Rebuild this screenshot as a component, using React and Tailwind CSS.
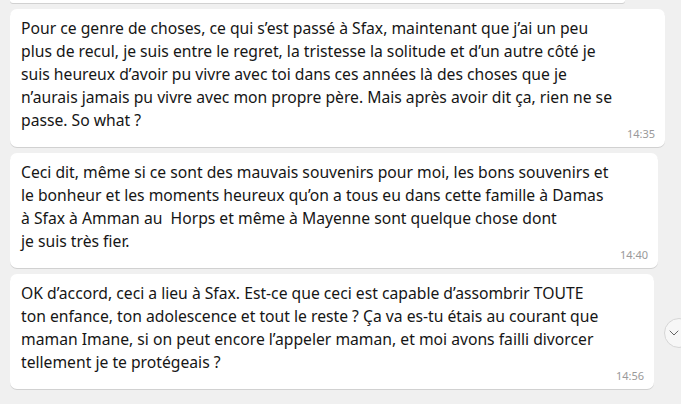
import { ChevronDown } from "lucide-react";

const messages = [
  {
    width: "w-[655px]",
    time: "14:35",
    lines: [
      "Pour ce genre de choses, ce qui s’est passé à Sfax, maintenant que j’ai un peu",
      "plus de recul, je suis entre le regret, la tristesse la solitude et d’un autre côté je",
      "suis heureux d’avoir pu vivre avec toi dans ces années là des choses que je",
      "n’aurais jamais pu vivre avec mon propre père. Mais après avoir dit ça, rien ne se",
      "passe. So what ?",
    ],
  },
  {
    width: "w-[648px]",
    time: "14:40",
    lines: [
      "Ceci dit, même si ce sont des mauvais souvenirs pour moi, les bons souvenirs et",
      "le bonheur et les moments heureux qu’on a tous eu dans cette famille à Damas",
      "à Sfax à Amman au  Horps et même à Mayenne sont quelque chose dont",
      "je suis très fier.",
    ],
  },
  {
    width: "w-[644px]",
    time: "14:56",
    lines: [
      "OK d’accord, ceci a lieu à Sfax. Est-ce que ceci est capable d’assombrir TOUTE",
      "ton enfance, ton adolescence et tout le reste ? Ça va es-tu étais au courant que",
      "maman Imane, si on peut encore l’appeler maman, et moi avons failli divorcer",
      "tellement je te protégeais ?",
    ],
  },
];

function Bubble({ msg }) {
  return (
    <div
      className={`${msg.width} rounded-[7px] bg-white pl-[11px] pr-[10px] pt-[8px] pb-[6px] shadow-[0_1px_0.5px_rgba(0,0,0,0.13)]`}
    >
      <div className="text-[15.7px] leading-[23px] text-[#161616]">
        {msg.lines.map((l, i) => (
          <div key={i} className="whitespace-pre">
            {l}
          </div>
        ))}
      </div>
      <div className="-mt-[5px] h-[14px] text-right text-[11px] leading-[14px] text-[#9a9a9a]">
        {msg.time}
      </div>
    </div>
  );
}

export default function App() {
  return (
    <div className="relative h-[404px] w-[681px] overflow-hidden bg-[#f0f0f0] font-['Noto_Sans',sans-serif]">
      <div className="flex flex-col gap-[6px] pl-[10px]">
        <div className="h-[3px] w-[615px] rounded-b-[7px] bg-white shadow-[0_1px_0.5px_rgba(0,0,0,0.13)]" />
        {messages.map((m) => (
          <Bubble key={m.time} msg={m} />
        ))}
      </div>

      {/* scroll down button */}
      <div className="absolute left-[664px] top-[318px] flex h-[30px] w-[30px] items-center justify-center rounded-full border border-[#d6d6d6] bg-[#f7f7f7]">
        <ChevronDown size={16} strokeWidth={1.5} className="-ml-[10px] text-[#666]" />
      </div>
    </div>
  );
}
